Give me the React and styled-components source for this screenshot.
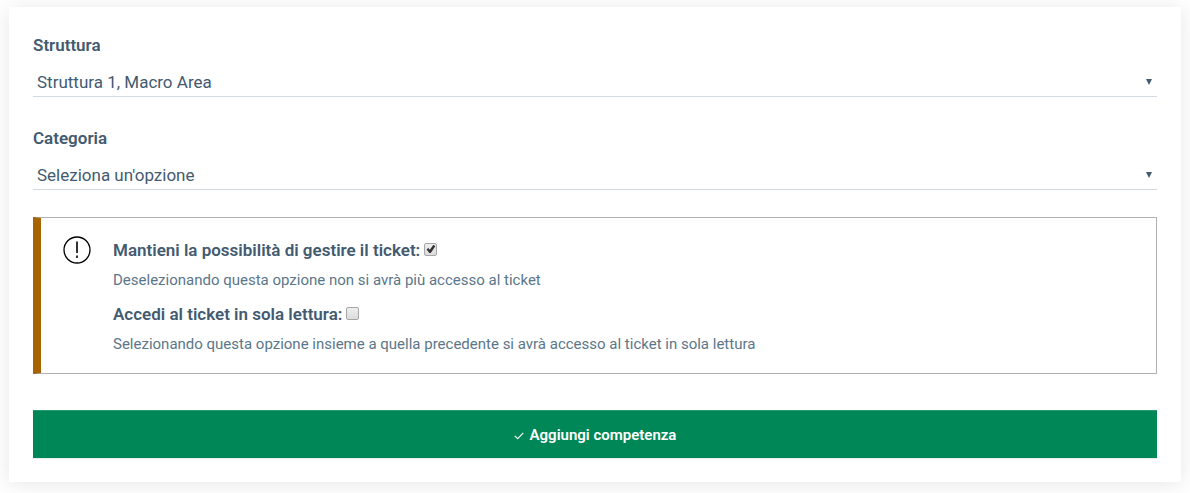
import React from "react";
import styled, { createGlobalStyle } from "styled-components";

const GlobalStyle = createGlobalStyle`
  *, *::before { box-sizing: border-box; }
  body {
    margin: 0;
    background: #fff;
    color: #435a70;
    font-family: Roboto, "Liberation Sans", sans-serif;
    font-size: 17px;
    line-height: 28px;
  }
`;

const Card = styled.form`
  display: flex;
  flex-direction: column;
  margin: 7px 9px 11px;
  padding: 24px;
  background: #fff;
  box-shadow: 0 2px 20px rgba(0, 0, 0, 0.1);
`;

const Field = styled.div`
  display: flex;
  flex-direction: column;
  gap: 8px;
  margin-bottom: 27px;
`;

const Label = styled.label`
  font-weight: 600;
`;

const SelectBox = styled.div`
  display: grid;
  align-items: center;
  border-bottom: 1px solid #d3dae3;

  & > * {
    grid-area: 1 / 1;
  }
`;

const Select = styled.select`
  appearance: none;
  width: 100%;
  height: 29px;
  padding: 0 24px 0 4px;
  border: 0;
  border-radius: 0;
  background: transparent;
  color: #435a70;
  font: inherit;
`;

const Arrow = styled.svg`
  justify-self: end;
  margin-right: 5px;
  fill: #435a70;
  pointer-events: none;
`;

const Alert = styled.section`
  display: flex;
  gap: 22px;
  margin-bottom: 36px;
  padding: 18px 22px 17px;
  border: 1px solid #b1b1b3;
  border-left: 8px solid #a66300;
`;

const AlertIcon = styled.svg`
  flex: none;
  fill: none;
  stroke: #000;
`;

const Options = styled.div`
  display: flex;
  flex-direction: column;
  gap: 8px;
`;

const Option = styled.div`
  display: flex;
  flex-direction: column;
  gap: 4px;
`;

const OptionRow = styled.div`
  display: flex;
  align-items: center;
  gap: 4px;
`;

const Checkbox = styled.input`
  appearance: none;
  display: block;
  width: 13px;
  height: 13px;
  margin: 0 0 2px;
  border: 1px solid #a6a6a6;
  border-radius: 2px;
  background: linear-gradient(#eee, #dcdcdc);

  &:checked::before {
    content: "";
    display: block;
    width: 11px;
    height: 11px;
    background: #333;
    clip-path: polygon(12% 54%, 28% 42%, 42% 56%, 74% 12%, 92% 24%, 50% 86%, 38% 86%);
  }
`;

const Help = styled.p`
  margin: 0;
  color: #5b7689;
  font-size: 15px;
  line-height: 24px;
`;

const SubmitButton = styled.button`
  display: flex;
  align-items: center;
  justify-content: center;
  gap: 6px;
  height: 48px;
  padding: 1px 24px 0;
  border: 0;
  background: #008758;
  box-shadow: inset 0 1px 0 rgba(255, 255, 255, 0.15), 0 1px 1px rgba(0, 0, 0, 0.075);
  color: #fff;
  font: inherit;
  font-size: 15px;
  font-weight: 600;
  line-height: 24px;
`;

const CheckIcon = styled.svg`
  margin-top: 3px;
  fill: none;
  stroke: #fff;
`;

function SelectField({ id, label, option }) {
  return (
    <Field>
      <Label htmlFor={id}>{label}</Label>
      <SelectBox>
        <Select id={id}>
          <option>{option}</option>
        </Select>
        <Arrow width="6" height="6" viewBox="0 0 6 6" aria-hidden="true">
          <path d="M0 0h6L3 6z" />
        </Arrow>
      </SelectBox>
    </Field>
  );
}

function CheckOption({ id, label, help, checked }) {
  return (
    <Option>
      <OptionRow>
        <Label htmlFor={id}>{label}</Label>
        <Checkbox
          id={id}
          type="checkbox"
          defaultChecked={checked}
          aria-describedby={`${id}-help`}
        />
      </OptionRow>
      <Help id={`${id}-help`}>{help}</Help>
    </Option>
  );
}

export default function App() {
  return (
    <>
      <GlobalStyle />
      <Card onSubmit={(event) => event.preventDefault()}>
        <SelectField id="struttura" label="Struttura" option="Struttura 1, Macro Area" />
        <SelectField id="categoria" label="Categoria" option="Seleziona un'opzione" />
        <Alert>
          <AlertIcon width="28" height="28" viewBox="0 0 28 28" aria-hidden="true">
            <circle cx="14" cy="14" r="13" strokeWidth="1.3" />
            <path d="M14 5.5v11.5M14 19.5v2.5" strokeWidth="1.6" />
          </AlertIcon>
          <Options>
            <CheckOption
              id="mantieni"
              label="Mantieni la possibilità di gestire il ticket:"
              help="Deselezionando questa opzione non si avrà più accesso al ticket"
              checked
            />
            <CheckOption
              id="lettura"
              label="Accedi al ticket in sola lettura:"
              help="Selezionando questa opzione insieme a quella precedente si avrà accesso al ticket in sola lettura"
            />
          </Options>
        </Alert>
        <SubmitButton type="submit">
          <CheckIcon width="10" height="8" viewBox="0 0 10 8" aria-hidden="true">
            <path d="M.7 3.8 3.7 6.7 9.3.9" strokeWidth="1.1" />
          </CheckIcon>
          Aggiungi competenza
        </SubmitButton>
      </Card>
    </>
  );
}
